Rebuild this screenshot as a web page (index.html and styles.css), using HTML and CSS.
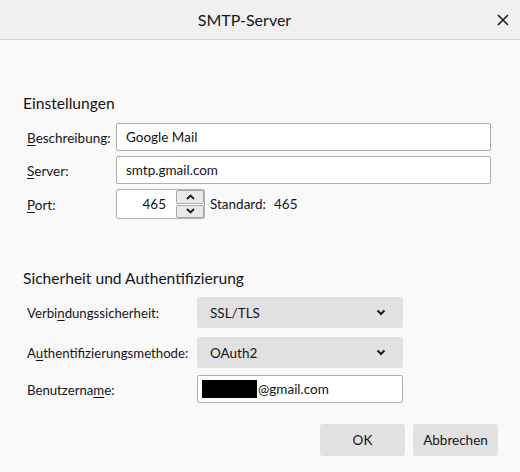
FILE: index.html
```html
<!DOCTYPE html>
<html lang="de">
<head>
<meta charset="utf-8">
<title>SMTP-Server</title>
<link rel="stylesheet" href="styles.css">
</head>
<body>
<div class="window">
  <header class="titlebar">
    <div class="title">SMTP-Server</div>
    <div class="close">
      <svg width="12" height="12" viewBox="0 0 12 12"><path d="M1 1 L11 11 M11 1 L1 11" stroke="#1b1b1b" stroke-width="1.6" fill="none"/></svg>
    </div>
  </header>
  <main class="content">
    <section class="section s1">
      <h2 class="heading">Einstellungen</h2>
      <div class="rows rows1">
        <div class="row">
          <label class="label"><u>B</u>eschreibung:</label>
          <div class="input wide">Google Mail</div>
        </div>
        <div class="row">
          <label class="label"><u>S</u>erver:</label>
          <div class="input wide">smtp.gmail.com</div>
        </div>
        <div class="row">
          <label class="label"><u>P</u>ort:</label>
          <div class="spinner">
            <span class="spinval">465</span>
            <div class="spinbtns">
              <div class="spinbtn"><svg width="9" height="6" viewBox="0 0 9 6"><path d="M1 5 L4.5 1.5 L8 5" stroke="#1b1b1b" stroke-width="1.8" fill="none"/></svg></div>
              <div class="spinbtn"><svg width="9" height="6" viewBox="0 0 9 6"><path d="M1 1 L4.5 4.5 L8 1" stroke="#1b1b1b" stroke-width="1.8" fill="none"/></svg></div>
            </div>
          </div>
          <span class="std">Standard:</span>
          <span class="stdval">465</span>
        </div>
      </div>
    </section>
    <section class="section s2">
      <h2 class="heading">Sicherheit und Authentifizierung</h2>
      <div class="rows rows2">
        <div class="row">
          <label class="label">Verbi<u>n</u>dungssicherheit:</label>
          <div class="select"><span>SSL/TLS</span><svg width="10" height="7" viewBox="0 0 10 7"><path d="M1.5 1.5 L5 5 L8.5 1.5" stroke="#1b1b1b" stroke-width="2" fill="none"/></svg></div>
        </div>
        <div class="row r-auth">
          <label class="label">A<u>u</u>thentifizierungsmethode:</label>
          <div class="select"><span>OAuth2</span><svg width="10" height="7" viewBox="0 0 10 7"><path d="M1.5 1.5 L5 5 L8.5 1.5" stroke="#1b1b1b" stroke-width="2" fill="none"/></svg></div>
        </div>
        <div class="row r-user">
          <label class="label">Benutzerna<u>m</u>e:</label>
          <div class="input user"><span class="redact"></span>@gmail.com</div>
        </div>
      </div>
    </section>
    <footer class="buttons">
      <div class="btn">OK</div>
      <div class="btn">Abbrechen</div>
    </footer>
  </main>
</div>
</body>
</html>
```
FILE: styles.css
```css
html, body {
  margin: 0;
  padding: 0;
}
body {
  width: 520px;
  height: 472px;
  background: #f9f9f9;
  font-family: "Lato", "Open Sans", sans-serif;
  font-size: 13.5px;
  color: #15141a;
  overflow: hidden;
}
.window {
  width: 520px;
  height: 472px;
}
.titlebar {
  display: flex;
  height: 39px;
  background: #f0f0f0;
  border-bottom: 1px solid #d4d4d4;
  align-items: center;
}
.title {
  flex: 1;
  text-align: center;
  font-size: 16px;
}
.close {
  width: 31px;
  display: flex;
  padding-left: 8px;
  box-sizing: border-box;
}
.content {
  padding: 0 22px 0 23px;
}
.heading {
  margin: 0;
  font-size: 15.6px;
  font-weight: normal;
  line-height: 20px;
  height: 20px;
}
.s1 {
  padding-top: 53px;
}
.s2 {
  padding-top: 49px;
}
.rows {
  display: flex;
  flex-direction: column;
  padding-left: 4px;
}
.rows1 {
  gap: 5px;
  margin-top: 10px;
}
.rows2 {
  margin-top: 9px;
}
.row {
  display: flex;
  align-items: center;
}
.rows1 .label {
  width: 89px;
}
.rows2 .label {
  width: 170px;
  font-size: 13.2px;
}
.r-auth {
  margin-top: 9px;
}
.r-user {
  margin-top: 7px;
}
.label {
  white-space: nowrap;
  line-height: 20px;
  padding-top: 1px;
}
.label u {
  text-decoration-thickness: 1px;
  text-underline-offset: 2px;
}
.input {
  box-sizing: border-box;
  height: 28px;
  background: #fff;
  border: 1px solid #aeaeae;
  border-radius: 2px;
  padding: 0 9px;
  display: flex;
  align-items: center;
}
.wide {
  width: 375px;
}
.spinner {
  box-sizing: border-box;
  width: 89px;
  height: 30px;
  background: #fff;
  border: 1px solid #aeaeae;
  border-radius: 2px;
  display: flex;
  align-items: center;
  justify-content: flex-end;
}
.spinval {
  padding-right: 10px;
}
.spinbtns {
  display: flex;
  flex-direction: column;
  gap: 1px;
  align-self: stretch;
}
.spinbtn {
  box-sizing: border-box;
  width: 28px;
  height: 14px;
  background: #e9e9e9;
  border: 1px solid #a9a9a9;
  border-radius: 2px;
  display: flex;
  align-items: center;
  justify-content: center;
}
.std {
  margin-left: 5px;
}
.stdval {
  margin-left: 8px;
}
.select {
  box-sizing: border-box;
  width: 206px;
  height: 31px;
  background: #e1e1e1;
  border-radius: 3px;
  padding: 0 17px 0 13px;
  display: flex;
  align-items: center;
  justify-content: space-between;
}
.user {
  width: 206px;
  padding-left: 4px;
}
.redact {
  display: inline-block;
  width: 55px;
  height: 18px;
  background: #000;
  margin-right: 1px;
}
.buttons {
  display: flex;
  justify-content: flex-end;
  gap: 8px;
  margin-top: 21px;
}
.btn {
  width: 85px;
  height: 32px;
  background: #e1e1e1;
  border-radius: 3px;
  display: flex;
  align-items: center;
  justify-content: center;
}
```
